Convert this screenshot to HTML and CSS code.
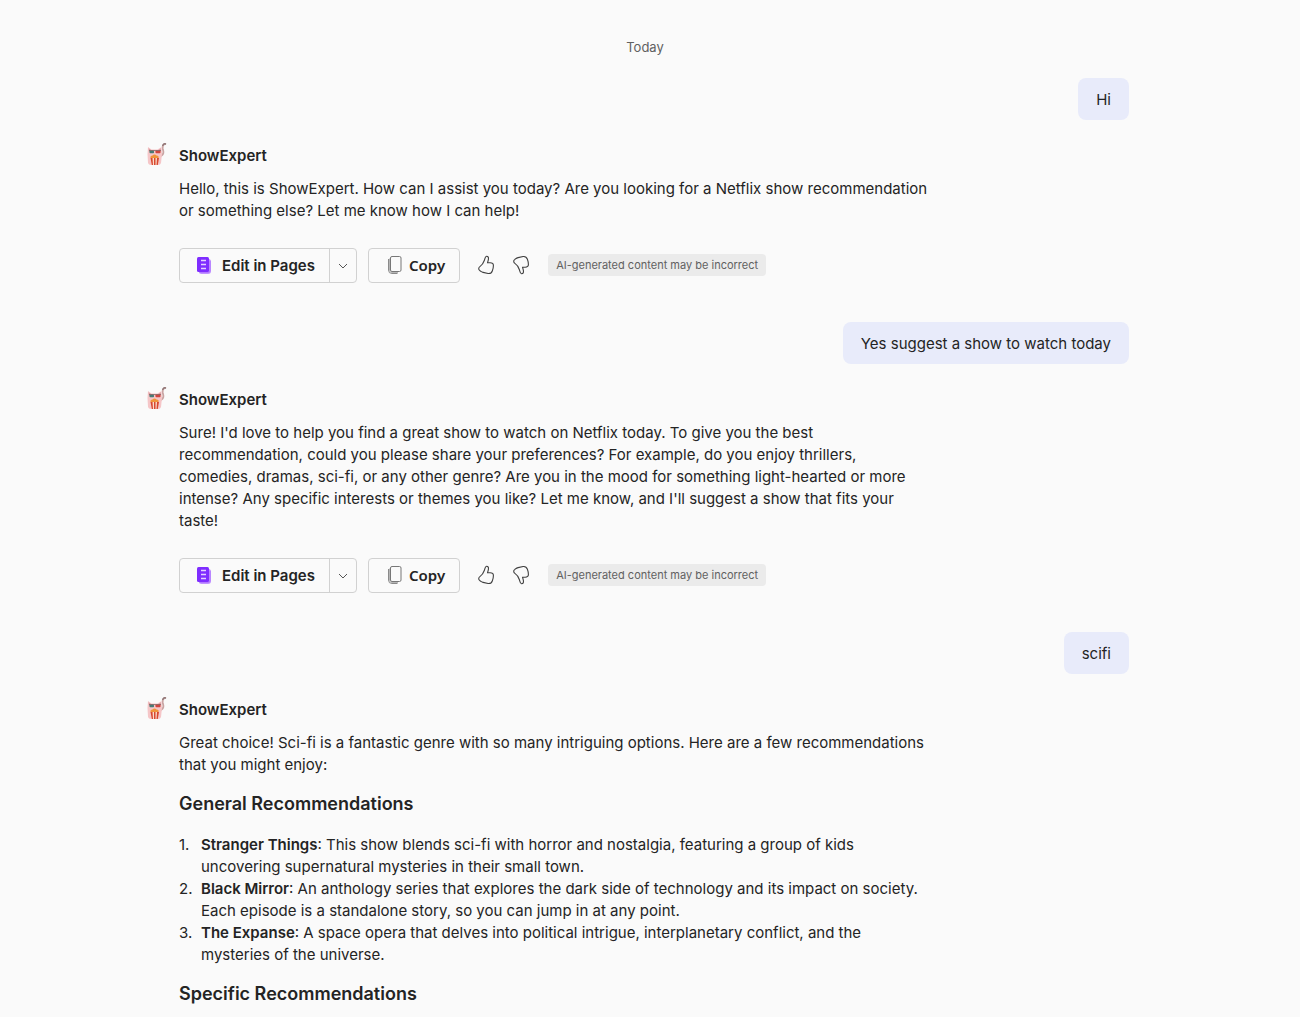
FILE: index.html
```html
<!DOCTYPE html>
<html lang="en">
<head>
<meta charset="utf-8">
<meta name="viewport" content="width=device-width, initial-scale=1">
<title>ShowExpert</title>
<link rel="stylesheet" href="styles.css">
</head>
<body>
<svg class="sprite" aria-hidden="true">
  <symbol id="avatar" viewBox="0 0 22 26">
    <path d="M16 15c4-2 2.200-5 1.800-7-.5-3 .5-4.800 2.400-5.200" fill="none" stroke="#c9a4a3" stroke-width="1.800" stroke-linecap="round"/>
    <path d="M17.800 4.300Q19 2.200 20.500 3" fill="none" stroke="#8f7676" stroke-width="1.500" stroke-linecap="round"/>
    <path d="M3 6l3.500 2.500h6L16.500 6l.5 7-1 9q-.5 2-3 2H6q-2.500 0-3-2L2.500 13z" fill="#f5c6c8"/>
    <path d="M3.600 7.300L6 9 4 10.500zM16 7.300L13.500 9l2 1.500z" fill="#d99a9e"/>
    <rect x="4.500" y="9.500" width="4.500" height="2.800" rx=".8" fill="#477b74"/>
    <rect x="10.500" y="9.500" width="5" height="2.800" rx=".8" fill="#d0453f"/>
    <path d="M4 9.500h12" stroke="#7a5a5a" stroke-width=".7"/>
    <path d="M5.500 17q-.5-2.500 2-2.500 2-2 4 0 2.800 0 2 2.500z" fill="#f0953a"/>
    <path d="M5.500 17h8.500l-1.200 7H6.800z" fill="#f9ddcb"/>
    <path d="M5.500 17h2l.5 7H6.800zM9 17h1.500v7H9zM12 17h2l-1.200 7h-1.300z" fill="#d8472f"/>
  </symbol>
  <symbol id="pages" viewBox="0 0 16 20">
    <path d="M4 3h8.500A2.500 2.500 0 0 1 15 5.500V15a3 3 0 0 1-3 3H5.500A2.500 2.500 0 0 1 3 15.500z" fill="#c193ff"/>
    <path d="M14 5v9.500a2 2 0 0 1-2 2H3.500" fill="none" stroke="#b27aff" stroke-width="1"/>
    <rect x="1" y="1" width="12" height="15" rx="1.500" fill="#7f2dff"/>
    <path d="M5 4.500h5M5 8.500h5M5 12.500h5" stroke="#e5d2ff" stroke-width="1.300"/>
  </symbol>
  <symbol id="copy" viewBox="0 0 16 20">
    <path d="M1.500 4v11q0 3.500 3.500 3.500h5.500" fill="none" stroke="#8a8a8a" stroke-width="1"/>
    <path d="M2.500 3.500v12q.2 2 2.500 2h6" fill="none" stroke="#b5b5b5" stroke-width="1"/>
    <rect x="3.500" y="1.500" width="10.500" height="15" rx="1.500" fill="#fafafa" stroke="#777"/>
  </symbol>
  <symbol id="thumb" viewBox="0 0 20 20">
    <path d="M10.500 1.300c1.700-.1 2.200 1.300 1.900 3-.2 1.400-.6 2.600-.9 3.500h2.600c2 0 3.300 1 3.300 2.600 0 1.300-.5 4-1 5.300-.8 2.200-2.300 3.100-4.300 2.800l-5-1.100c-1-.2-1.700-.5-2.500-1.200l-1-.8c-1.400-1-1-3 .3-3.800 2.400-1.500 3.600-3.700 4.500-6.300.5-1.400.5-3.800 2.100-4z" fill="none" stroke="#404040" stroke-width="1.100" stroke-linejoin="round"/>
  </symbol>
  <symbol id="chevron" viewBox="0 0 10 10">
    <path d="M1 3l4 4 4-4" fill="none" stroke="#555" stroke-width="1"/>
  </symbol>
</svg>

<main class="chat">
  <p class="day">Today</p>

  <section class="turn">
    <p class="bubble">Hi</p>
    <article class="reply">
      <svg class="avatar" aria-hidden="true"><use href="#avatar"/></svg>
      <div class="body">
        <h2 class="name">ShowExpert</h2>
        <p>Hello, this is ShowExpert. How can I assist you today? Are you looking for a Netflix show recommendation or something else? Let me know how I can help!</p>
        <div class="actions">
          <div class="split">
            <button class="edit" type="button"><svg class="doc" aria-hidden="true"><use href="#pages"/></svg>Edit in Pages</button>
            <button class="more" type="button" aria-label="More options"><svg class="chevron" aria-hidden="true"><use href="#chevron"/></svg></button>
          </div>
          <button class="copy" type="button"><svg class="doc" aria-hidden="true"><use href="#copy"/></svg>Copy</button>
          <div class="votes">
            <button class="vote" type="button" aria-label="Like"><svg aria-hidden="true"><use href="#thumb"/></svg></button>
            <button class="vote down" type="button" aria-label="Dislike"><svg aria-hidden="true"><use href="#thumb"/></svg></button>
          </div>
          <span class="notice">AI-generated content may be incorrect</span>
        </div>
      </div>
    </article>
  </section>

  <section class="turn">
    <p class="bubble">Yes suggest a show to watch today</p>
    <article class="reply">
      <svg class="avatar" aria-hidden="true"><use href="#avatar"/></svg>
      <div class="body">
        <h2 class="name">ShowExpert</h2>
        <p>Sure! I'd love to help you find a great show to watch on Netflix today. To give you the best recommendation, could you please share your preferences? For example, do you enjoy thrillers, comedies, dramas, sci-fi, or any other genre? Are you in the mood for something light-hearted or more intense? Any specific interests or themes you like? Let me know, and I'll suggest a show that fits your taste!</p>
        <div class="actions">
          <div class="split">
            <button class="edit" type="button"><svg class="doc" aria-hidden="true"><use href="#pages"/></svg>Edit in Pages</button>
            <button class="more" type="button" aria-label="More options"><svg class="chevron" aria-hidden="true"><use href="#chevron"/></svg></button>
          </div>
          <button class="copy" type="button"><svg class="doc" aria-hidden="true"><use href="#copy"/></svg>Copy</button>
          <div class="votes">
            <button class="vote" type="button" aria-label="Like"><svg aria-hidden="true"><use href="#thumb"/></svg></button>
            <button class="vote down" type="button" aria-label="Dislike"><svg aria-hidden="true"><use href="#thumb"/></svg></button>
          </div>
          <span class="notice">AI-generated content may be incorrect</span>
        </div>
      </div>
    </article>
  </section>

  <section class="turn">
    <p class="bubble">scifi</p>
    <article class="reply">
      <svg class="avatar" aria-hidden="true"><use href="#avatar"/></svg>
      <div class="body">
        <h2 class="name">ShowExpert</h2>
        <p>Great choice! Sci-fi is a fantastic genre with so many intriguing options. Here are a few recommendations that you might enjoy:</p>
        <h3 class="heading">General Recommendations</h3>
        <ol class="shows">
          <li><strong>Stranger Things</strong>: This show blends sci-fi with horror and nostalgia, featuring a group of kids uncovering supernatural mysteries in their small town.</li>
          <li><strong>Black Mirror</strong>: An anthology series that explores the dark side of technology and its impact on society. Each episode is a standalone story, so you can jump in at any point.</li>
          <li><strong>The Expanse</strong>: A space opera that delves into political intrigue, interplanetary conflict, and the mysteries of the universe.</li>
        </ol>
        <h3 class="heading">Specific Recommendations</h3>
      </div>
    </article>
  </section>
</main>
</body>
</html>
```
FILE: styles.css
```css
* { box-sizing: border-box; }

body {
  margin: 0;
  padding: 36px 10px 10px 0;
  background: #fafafa;
  color: #242424;
  font: 15px/22px Inter, "Liberation Sans", sans-serif;
}

p, h2, h3, ol { margin: 0; }
strong { font-weight: 600; }
.sprite { display: none; }

.chat {
  max-width: 1000px;
  margin: 0 auto;
  padding-right: 16px;
  display: flex;
  flex-direction: column;
}

.day {
  margin-bottom: 20px;
  padding-left: 16px;
  color: #616161;
  font-size: 13px;
  text-align: center;
}

.turn {
  display: flex;
  flex-direction: column;
  gap: 25px;
  margin-bottom: 39px;
}
.turn:last-child { margin-bottom: 0; }

.bubble {
  align-self: flex-end;
  padding: 11px 18px 9px;
  border-radius: 8px;
  background: #e8ebfa;
}

.reply { display: flex; gap: 12px; }
.avatar {
  flex: none;
  width: 22px;
  height: 26px;
  margin-top: -4px;
}
.body { flex: 1; max-width: 750px; }
.name {
  margin-bottom: 11px;
  font-size: 15px;
  font-weight: 600;
}

.actions {
  display: flex;
  flex-wrap: wrap;
  align-items: center;
  margin-top: 26px;
}

button {
  display: flex;
  align-items: center;
  justify-content: center;
  padding: 0;
  border: 0;
  background: none;
  color: inherit;
  font: inherit;
}

.split, .copy {
  height: 35px;
  border: 1px solid #d1d1d1;
  border-radius: 4px;
  font-weight: 600;
}
.split { display: flex; margin-right: 11px; }
.edit { gap: 10px; padding: 0 14px 0 16px; }
.more { width: 27px; border-left: 1px solid #d1d1d1; }
.copy {
  gap: 6px;
  padding: 0 14px 2px 18px;
  font-family: "Noto Sans", "Open Sans", sans-serif;
}
.doc { width: 16px; height: 20px; }
.chevron { width: 10px; height: 10px; }

.votes { display: flex; gap: 15px; margin: 0 17px 2px 16px; }
.vote svg { width: 20px; height: 20px; }
.down svg { transform: scaleY(-1); }

.notice {
  margin-bottom: 2px;
  padding: 0 8px;
  border-radius: 4px;
  background: #ebebeb;
  color: #616161;
  font-size: 11px;
}

.heading {
  margin-top: 16px;
  font-size: 18px;
  line-height: 24px;
  font-weight: 600;
}

.shows {
  margin-top: 18px;
  padding-left: 22px;
  list-style: none;
  counter-reset: show;
}
.shows li { counter-increment: show; }
.shows li::before {
  content: counter(show) ".";
  display: inline-block;
  width: 22px;
  margin-left: -22px;
}
```
